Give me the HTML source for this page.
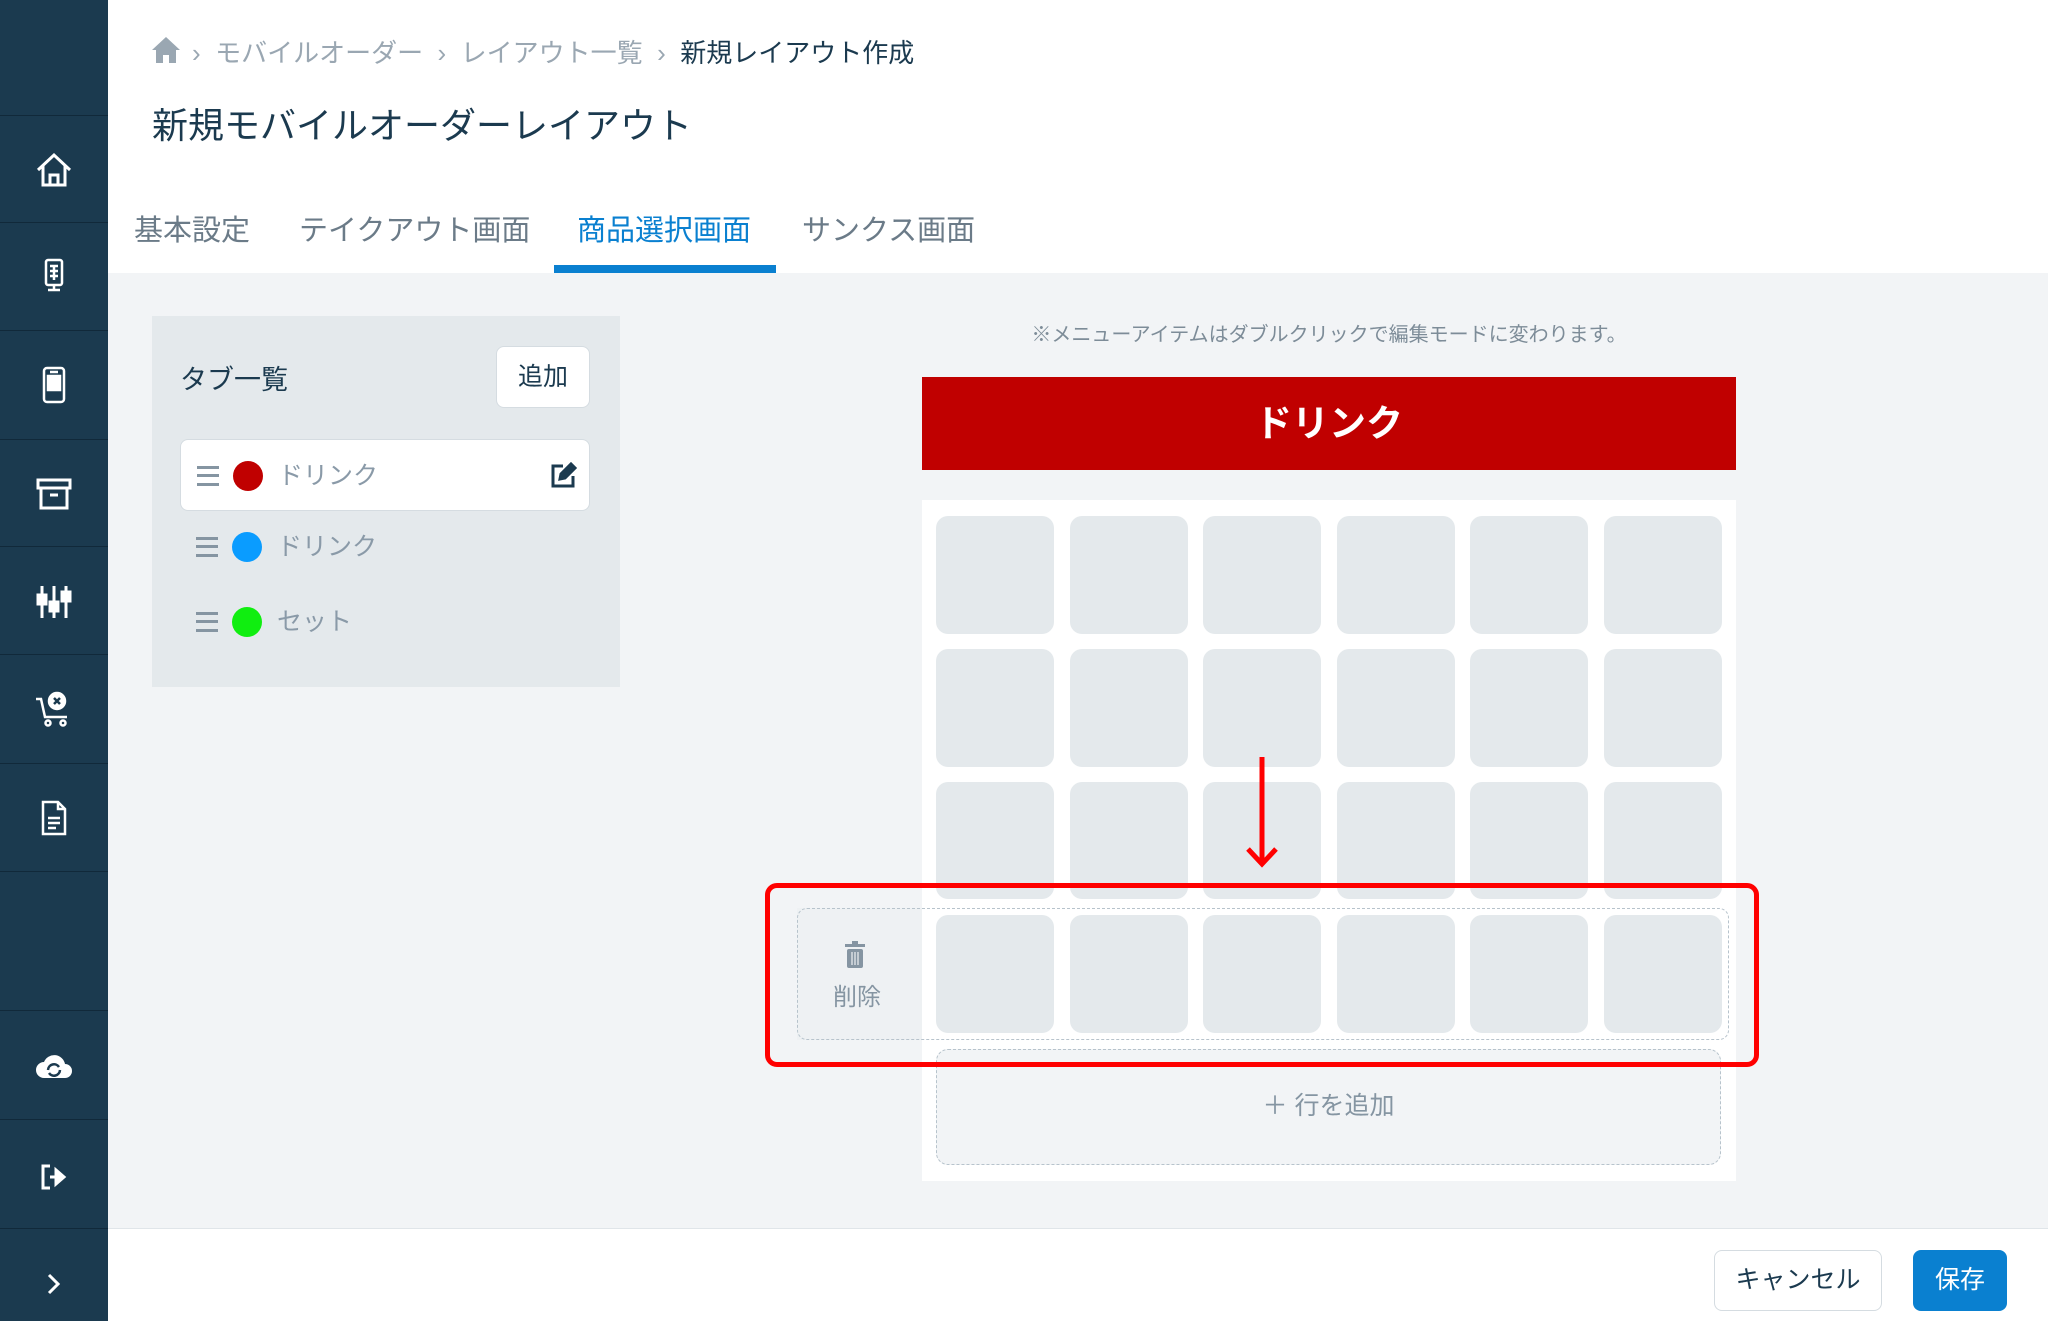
<!DOCTYPE html>
<html><head><meta charset="utf-8"><style>
*{margin:0;padding:0;box-sizing:border-box}
body{width:2048px;height:1321px;overflow:hidden;background:#f2f4f6;font-family:"Liberation Sans","Noto Sans CJK JP",sans-serif;position:relative}
.a{position:absolute}
#side{left:0;top:0;width:108px;height:1321px;background:#1b3a4f}
.sep{position:absolute;left:0;width:108px;height:1px;background:#11293a}
.ic{position:absolute;left:34px;width:40px;height:40px}
#hdr{left:108px;top:0;width:1940px;height:273px;background:#fff}
.bc{top:33px;font-size:26px;color:#9aa7b2}
.tab{top:207px;font-size:29px;color:#6b7b88}
.cell{position:absolute;width:118px;height:118px;background:#e4e9ec;border-radius:12px}
.row{position:absolute;left:180px;width:410px;height:72px}
.ham{position:absolute;left:16px;top:26px;width:22px;height:20px;border-top:3px solid #8595a2;border-bottom:3px solid #8595a2}
.ham:after{content:"";position:absolute;left:0;top:5px;width:22px;height:3px;background:#8595a2}
.dot{position:absolute;left:52px;top:21px;width:30px;height:30px;border-radius:50%}
.rt{position:absolute;left:97px;top:16px;font-size:25px;color:#8a9aa8}
</style></head><body>
<div id="side" class="a">
<div class="sep" style="top:115px"></div><div class="sep" style="top:222px"></div><div class="sep" style="top:330px"></div><div class="sep" style="top:439px"></div><div class="sep" style="top:546px"></div><div class="sep" style="top:654px"></div><div class="sep" style="top:763px"></div><div class="sep" style="top:871px"></div><div class="sep" style="top:1010px"></div><div class="sep" style="top:1119px"></div><div class="sep" style="top:1228px"></div>
<svg class="ic" style="top:150px" viewBox="0 0 40 40" fill="none" stroke="#fff" stroke-width="3"><path d="M4 20 L20 5 L36 20 M9 16 V35 H31 V16 M16 35 V25 H24 V35"/></svg>
<svg class="ic" style="top:257px" viewBox="0 0 40 40" fill="none" stroke="#fff" stroke-width="2.5"><rect x="12" y="3" width="16" height="25" rx="2"/><path d="M16 9h8M16 14h8M16 19h8M20 9v14M14 33h12M20 28v5" /></svg>
<svg class="ic" style="top:365px" viewBox="0 0 40 40" fill="none" stroke="#fff" stroke-width="2.5"><rect x="10" y="3" width="20" height="34" rx="3"/><rect x="14" y="11" width="12" height="14" fill="#fff"/><path d="M16 7h8" /></svg>
<svg class="ic" style="top:474px" viewBox="0 0 40 40" fill="none" stroke="#fff" stroke-width="3"><rect x="4" y="6" width="32" height="8"/><path d="M7 14v20h26V14M16 21h8"/></svg>
<svg class="ic" style="top:582px" viewBox="0 0 40 40" fill="none" stroke="#fff" stroke-width="3"><path d="M8 4v32M20 4v32M32 4v32"/><rect x="4" y="13" width="8" height="9" fill="#fff"/><rect x="16" y="20" width="8" height="9" fill="#fff"/><rect x="28" y="10" width="8" height="9" fill="#fff"/></svg>
<svg class="ic" style="top:689px" viewBox="0 0 40 40" fill="none" stroke="#fff" stroke-width="2.5"><path d="M2 10h5l4 18h22"/><circle cx="14" cy="34" r="2.5"/><circle cx="29" cy="34" r="2.5"/><circle cx="23" cy="12" r="8" fill="#fff"/><path d="M20 9l6 6M26 9l-6 6" stroke="#1b3a4f"/></svg>
<svg class="ic" style="top:798px" viewBox="0 0 40 40" fill="none" stroke="#fff" stroke-width="2.5"><path d="M9 4h15l7 7v25H9z M24 4v7h7 M14 20h12M14 25h12M14 30h8"/></svg>
<svg class="ic" style="top:1046px" viewBox="0 0 40 40"><path d="M10 32a8 8 0 0 1 0-16a11 11 0 0 1 21 2a7 7 0 0 1 0 14z" fill="#fff"/><path d="M14 24a6 6 0 0 1 11-3M26 24a6 6 0 0 1-11 3" stroke="#1b3a4f" stroke-width="2.5" fill="none"/></svg>
<svg class="ic" style="top:1157px" viewBox="0 0 40 40" fill="none" stroke="#fff" stroke-width="3"><path d="M16 9h-7v22h7"/><path d="M16 20h10M22 13l8 7-8 7z" fill="#fff"/></svg>
<svg class="ic" style="top:1264px" viewBox="0 0 40 40" fill="none" stroke="#fff" stroke-width="3"><path d="M15 11l9 9-9 9"/></svg>
</div>
<div id="hdr" class="a">
<svg class="a" style="left:43px;top:36px" width="30" height="28" viewBox="0 0 30 28"><path d="M15 1L1 14h4v13h7v-8h6v8h7V14h4z" fill="#9aa7b2"/></svg>
<div class="a bc" style="left:84px">›&nbsp;&nbsp;モバイルオーダー&nbsp;&nbsp;›&nbsp;&nbsp;レイアウト一覧&nbsp;&nbsp;›&nbsp;&nbsp;<span style="color:#1b3a4f">新規レイアウト作成</span></div>
<div class="a" style="left:44px;top:97px;font-size:36px;color:#1b3a4f">新規モバイルオーダーレイアウト</div>
<div class="a tab" style="left:26px">基本設定</div>
<div class="a tab" style="left:191px">テイクアウト画面</div>
<div class="a tab" style="left:469px;color:#0a80d0">商品選択画面</div>
<div class="a tab" style="left:694px">サンクス画面</div>
<div class="a" style="left:446px;top:265px;width:222px;height:8px;background:#0a80d0"></div>
</div>
<div class="a" style="left:152px;top:316px;width:468px;height:371px;background:#e4e9ec"></div>
<div class="a" style="left:180px;top:358px;font-size:27px;color:#1b3a4f">タブ一覧</div>
<div class="a" style="left:496px;top:346px;width:94px;height:62px;background:#fff;border:1px solid #d5dce1;border-radius:8px;font-size:25px;color:#1b3a4f;text-align:center;line-height:60px">追加</div>
<div class="row" style="top:439px;background:#fff;border:1px solid #d5dce1;border-radius:8px"><div class="ham"></div><div class="dot" style="background:#c00000"></div><div class="rt">ドリンク</div>
<svg class="a" style="left:368px;top:22px" width="28" height="28" viewBox="0 0 28 28" fill="none" stroke="#1b3a4f" stroke-width="3"><path d="M14 4H4v20h20V14"/><path d="M11 17l1-5L22 2l4 4-10 10z" fill="#1b3a4f"/></svg></div>
<div class="row" style="top:511px"><div class="ham"></div><div class="dot" style="background:#0a9cff"></div><div class="rt">ドリンク</div></div>
<div class="row" style="top:586px"><div class="ham"></div><div class="dot" style="background:#10ee10"></div><div class="rt">セット</div></div>
<div class="a" style="left:922px;top:318px;width:814px;text-align:center;font-size:20px;color:#7d8c98">※メニューアイテムはダブルクリックで編集モードに変わります。</div>
<div class="a" style="left:922px;top:377px;width:814px;height:93px;background:#c00000;color:#fff;font-size:37px;font-weight:bold;text-align:center;line-height:93px">ドリンク</div>
<div class="a" style="left:922px;top:500px;width:814px;height:681px;background:#fff"></div>
<div class="a" style="left:797px;top:908px;width:125px;height:132px;background:#eef1f3"></div>
<div class="a" style="left:797px;top:908px;width:932px;height:132px;border:1.5px dashed #b7c3cc;border-radius:10px"></div>
<div id="cells"></div>
<svg class="a" style="left:843px;top:940px" width="24" height="30" viewBox="0 0 24 30"><rect x="2" y="4" width="20" height="3" fill="#8595a2"/><rect x="9" y="1" width="6" height="3" fill="#8595a2"/><rect x="4" y="9" width="16" height="19" rx="2" fill="#8595a2"/><path d="M9 12v13M12 12v13M15 12v13" stroke="#eef1f3" stroke-width="1.2"/></svg>
<div class="a" style="left:797px;top:977px;width:120px;text-align:center;font-size:24px;color:#8595a2">削除</div>
<div class="a" style="left:936px;top:1049px;width:785px;height:116px;border:1.5px dashed #b7c3cc;border-radius:12px;background:#f2f4f6;text-align:center;line-height:112px;font-size:25px;color:#8595a2">＋ 行を追加</div>
<div class="a" style="left:765px;top:883px;width:994px;height:184px;border:5px solid #ff0000;border-radius:12px"></div>
<svg class="a" style="left:1244px;top:757px" width="36" height="112" viewBox="0 0 36 112"><path d="M18 0V106M4 92L18 107L32 92" stroke="#ff0000" stroke-width="5" fill="none"/></svg>
<div class="a" style="left:108px;top:1228px;width:1940px;height:93px;background:#fff;border-top:1px solid #e0e5e9"></div>
<div class="a" style="left:1714px;top:1250px;width:168px;height:61px;border:1px solid #d5dce1;border-radius:8px;background:#fff;text-align:center;line-height:59px;font-size:25px;color:#1b3a4f">キャンセル</div>
<div class="a" style="left:1913px;top:1250px;width:94px;height:61px;border-radius:8px;background:#0a80d0;text-align:center;line-height:61px;font-size:25px;color:#fff">保存</div>
<script>
var h='';for(var r=0;r<4;r++)for(var c=0;c<6;c++){h+='<div class="cell" style="left:'+(936+c*133.5)+'px;top:'+(516+r*133)+'px;'+(r==2?'height:117px':'')+'"></div>';}
document.getElementById('cells').innerHTML=h;
</script>
</body></html>
